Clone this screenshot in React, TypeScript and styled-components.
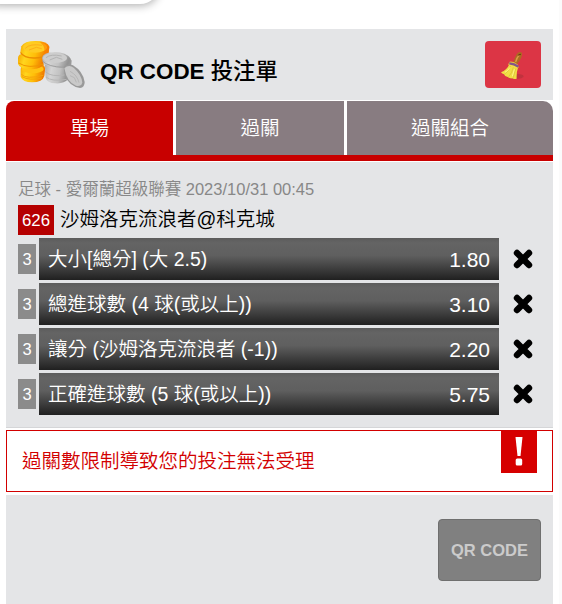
import styled, { createGlobalStyle } from 'styled-components';

const GlobalStyle = createGlobalStyle`
  * {
    box-sizing: border-box;
  }
  body {
    margin: 0;
    background: #fff;
    color: #000;
    font-family: 'Liberation Sans', 'Noto Sans CJK TC', sans-serif;
    font-weight: 350;
    overflow: hidden;
  }
`;

const Page = styled.div`
  position: relative;
  width: 562px;
  height: 604px;
  padding: 29px 6px 0;
  border-right: 3px solid #fbfbfb;
  display: flex;
  flex-direction: column;
  overflow: hidden;
`;

const Popover = styled.div`
  position: absolute;
  left: -20px;
  top: -36px;
  width: 180px;
  height: 40px;
  background: #fff;
  border-radius: 20px;
  box-shadow: 0 2px 8px rgba(0, 0, 0, 0.3);
`;

const Header = styled.header`
  width: 547px;
  height: 71px;
  padding: 7px 12px 0 8px;
  background: #e4e5e7;
  display: flex;
  align-items: flex-start;
`;

const Title = styled.h1`
  flex: 1;
  margin: 18px 0 0 10px;
  font-size: 22.4px;
  line-height: 30px;
  font-weight: 600;
`;

const TitleCjk = styled.span`
  font-family: 'Noto Sans CJK TC', sans-serif;
  font-weight: 500;
`;

const ClearButton = styled.button`
  width: 56px;
  height: 47px;
  margin-top: 5px;
  padding: 0;
  border: 0;
  border-radius: 4px;
  background: #dc3545;
`;

const Tabs = styled.nav`
  width: 547px;
  height: 60px;
  margin-top: 1px;
  display: flex;
  gap: 3px;
  border-bottom: 6px solid #c80000;
  border-radius: 8px 10px 0 0;
  overflow: hidden;
`;

const Tab = styled.div<{ $width: number; $active?: boolean }>`
  width: ${({ $width }) => $width}px;
  height: 54px;
  background: ${({ $active }) => ($active ? '#c80000' : '#887c81')};
  color: #fff;
  font-size: 19.5px;
  line-height: 55px;
  text-align: center;
`;

const Slip = styled.section`
  width: 547px;
  height: 266px;
  margin-top: 1px;
  padding: 15px 12px 0;
  background: #e4e5e7;
  border-bottom: 1px solid #d5d6d8;
`;

const League = styled.div`
  height: 28px;
  color: #888;
  font-size: 16.5px;
  line-height: 24px;
  white-space: nowrap;
`;

const Match = styled.div`
  height: 30px;
  display: flex;
  gap: 6px;
  font-size: 19.5px;
  line-height: 28px;
  white-space: nowrap;
`;

const MatchCode = styled.span`
  width: 36px;
  background: #b50000;
  color: #fff;
  font-size: 16.8px;
  line-height: 31px;
  text-align: center;
`;

const BetList = styled.div`
  margin-top: 3px;
  display: flex;
  flex-direction: column;
  gap: 3px;
`;

const BetRow = styled.div`
  height: 42px;
  display: flex;
  align-items: center;
`;

const Count = styled.span`
  width: 18px;
  height: 30px;
  margin-right: 3px;
  background: #8b8b8b;
  color: #fff;
  font-size: 16.5px;
  line-height: 30px;
  text-align: center;
`;

const Bar = styled.div`
  width: 460px;
  height: 42px;
  padding: 0 9px;
  display: flex;
  justify-content: space-between;
  background: linear-gradient(#5c5c5c 0%, #646464 12%, #5f5f5f 42%, #202020 100%);
  color: #fff;
  font-size: 19.5px;
  line-height: 43px;
  white-space: nowrap;
`;

const Odds = styled.span`
  font-size: 21px;
  line-height: 43px;
`;

const RemoveIcon = styled.svg`
  width: 20px;
  height: 20px;
  margin-left: 14px;
`;

const Alert = styled.div`
  width: 547px;
  height: 62px;
  margin-top: 2px;
  padding: 0 15px;
  border: 1px solid #d20000;
  display: flex;
  justify-content: space-between;
  color: #d20000;
  font-size: 19.5px;
  line-height: 60px;
`;

const AlertMark = styled.svg`
  width: 36px;
  height: 42px;
  background: #d60000;
`;

const Footer = styled.footer`
  width: 547px;
  height: 109px;
  margin-top: 3px;
  padding: 24px 12px 0;
  background: #e4e5e7;
  display: flex;
  justify-content: flex-end;
`;

const QrButton = styled.button`
  width: 103px;
  height: 62px;
  padding: 0;
  border: 1px solid #6f6f6f;
  border-radius: 4px;
  background: #808080;
  color: #cbcbcb;
  font-family: inherit;
  font-size: 16.5px;
  font-weight: 700;
`;

const Coins = () => (
  <svg width="76" height="56" viewBox="0 0 228 168">
    <defs>
      <linearGradient id="gold" x1="0" x2="1" y1="0" y2="0.2">
        <stop offset="0" stopColor="#f5a400" />
        <stop offset="0.3" stopColor="#ffd61e" />
        <stop offset="0.65" stopColor="#ffbd08" />
        <stop offset="1" stopColor="#f07c00" />
      </linearGradient>
      <linearGradient id="silver" x1="0" x2="1" y1="0" y2="0.2">
        <stop offset="0" stopColor="#a8a8a8" />
        <stop offset="0.35" stopColor="#d4d4d4" />
        <stop offset="0.7" stopColor="#c2c2c2" />
        <stop offset="1" stopColor="#949494" />
      </linearGradient>
    </defs>
    <path d="M20 100q0-11 12-15h51q12 4 10 18l-2 17q-5 19-37 19-28 0-34-17z" fill="url(#gold)" />
    <path d="M22 115q15 16 66 3M24 122q22 13 60 4" fill="none" stroke="#f5a208" strokeWidth="3" />
    <ellipse cx="56" cy="99" rx="33" ry="13" fill="#ffc412" />
    <path d="M12 66q0-13 18-13h53q11 4 9 20-1 26-39 27-36 0-41-17z" fill="url(#gold)" />
    <path d="M14 81q29 19 76 3" fill="none" stroke="#f19600" strokeWidth="3" />
    <path d="M22 31q9-16 42-16 37 0 42 17l-2 18q-8 18-44 17-35-1-41-18z" fill="url(#gold)" />
    <path d="M20 50q10 17 43 16 24 0 39-12" fill="none" stroke="#ec8d00" strokeWidth="4" />
    <ellipse cx="63" cy="34" rx="36" ry="16" fill="#ffcb22" />
    <path d="M34 37q14-15 50-9M45 42l22-8 16 4" fill="none" stroke="#fdae17" strokeWidth="3" />
    <path d="M78 18q24 2 28 16l-2 16q-8 9-19 11 16-22-7-43z" fill="#ff8000" opacity=".6" />
    <path d="M92 82q4-12 18-14h48l7 18-3 44q-12 14-38 12-25-1-29-17z" fill="url(#silver)" />
    <path d="M94 107q18 18 64 9M96 123q18 15 62 7" fill="none" stroke="#b6b6b6" strokeWidth="3" />
    <path d="M140 56q28 2 33 18l-2 18-20 2z" fill="#999" />
    <path d="M84 66q2-17 38-18 36 1 47 19l-3 17q-12 14-42 10l-35-9z" fill="url(#silver)" />
    <ellipse cx="123" cy="66" rx="36" ry="15" fill="#cdcdcd" />
    <path d="M96 65q14-12 47-5M107 72l20-8 18 6" fill="none" stroke="#b3b3b3" strokeWidth="3" />
    <path d="M85 75q18 18 65 19" fill="none" stroke="#9f9f9f" strokeWidth="3" />
    <path d="M149 92q12-11 28-4 30 18 35 50 0 17-14 18-32-4-46-38z" fill="#999" />
    <path d="M151 97q13-13 28-2 24 21 26 45-5 13-19 9-27-9-35-52z" fill="#c9c9c9" />
    <path d="M168 106q22 11 27 34M168 119l13 6 6 14" fill="none" stroke="#b7b7b7" strokeWidth="3" />
  </svg>
);

const Broom = () => (
  <svg width="56" height="47" viewBox="3 9 168 141" display="block">
    <ellipse cx="94" cy="115" rx="25" ry="8" fill="#8e2d32" opacity=".35" />
    <path d="M88 74q4-17 11-27 9-9 15-1 2 12-14 31z" fill="#ad6b22" />
    <path d="M95 72q3-13 11-21" fill="none" stroke="#dc9c46" strokeWidth="4" />
    <path d="M104 51l5-2" stroke="#6e3b16" strokeWidth="4" strokeLinecap="round" />
    <path d="M77 71q12-2 25 9l2 10-32-10z" fill="#e3c438" />
    <path d="M76 79q16 2 26 10-5 14-4 33-8 3-14-1-7 1-13-4-9-1-11-8-6-1-9-6 18-7 25-24z" fill="#f1dd45" />
    <path d="M80 84q-7 17-19 25M88 88q-4 18-14 28M96 91q-5 15-8 28" fill="none" stroke="#d8bb38" strokeWidth="2" />
    <path d="M78 88q-6 10-15 15M91 94l-6 21" fill="none" stroke="#fff68a" strokeWidth="3" />
    <path d="M76 76q15 1 27 10" fill="none" stroke="#83558a" strokeWidth="7" />
  </svg>
);

const bets = [
  { label: '大小[總分] (大 2.5)', odds: '1.80' },
  { label: '總進球數 (4 球(或以上))', odds: '3.10' },
  { label: '讓分 (沙姆洛克流浪者 (-1))', odds: '2.20' },
  { label: '正確進球數 (5 球(或以上))', odds: '5.75' },
];

const App: React.FC = () => {
  return (
    <>
      <GlobalStyle />
      <Page>
        <Popover />
        <Header>
          <Coins />
          <Title>
            QR CODE <TitleCjk>投注單</TitleCjk>
          </Title>
          <ClearButton>
            <Broom />
          </ClearButton>
        </Header>

        <Tabs>
          <Tab $width={167} $active>
            單場
          </Tab>
          <Tab $width={168}>過關</Tab>
          <Tab $width={206}>過關組合</Tab>
        </Tabs>

        <Slip>
          <League>足球 - 愛爾蘭超級聯賽 2023/10/31 00:45</League>
          <Match>
            <MatchCode>626</MatchCode>
            <span>沙姆洛克流浪者@科克城</span>
          </Match>
          <BetList>
            {bets.map((bet, idx) => (
              <BetRow key={idx}>
                <Count>3</Count>
                <Bar>
                  <span>{bet.label}</span>
                  <Odds>{bet.odds}</Odds>
                </Bar>
                <RemoveIcon viewBox="0 0 20 20">
                  <path
                    d="M4 4l12 12M16 4L4 16"
                    stroke="#000"
                    strokeWidth="6.4"
                    strokeLinecap="round"
                  />
                </RemoveIcon>
              </BetRow>
            ))}
          </BetList>
        </Slip>

        <Alert>
          <span>過關數限制導致您的投注無法受理</span>
          <AlertMark viewBox="0 0 36 42">
            <path d="M14.5 6h7l-2 19h-3z" fill="#fff" />
            <rect x="14.7" y="27.5" width="6.5" height="7" rx="1.5" fill="#fff" />
          </AlertMark>
        </Alert>

        <Footer>
          <QrButton>QR CODE</QrButton>
        </Footer>
      </Page>
    </>
  );
};

export default App;
